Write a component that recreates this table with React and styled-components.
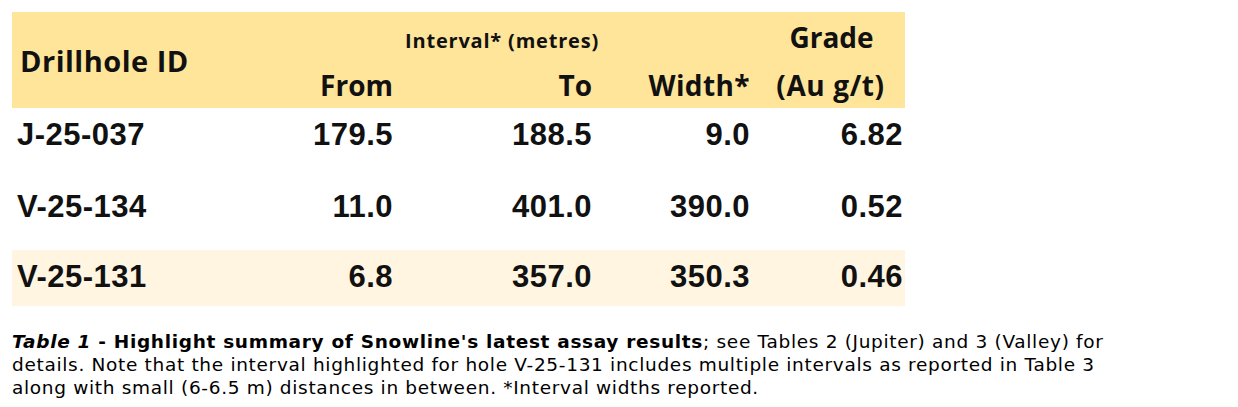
import React from "react";
import styled, { createGlobalStyle } from "styled-components";

const Global = createGlobalStyle`
  html, body { margin: 0; padding: 0; background: #ffffff; }
  body { font-family: "DejaVu Sans", Verdana, sans-serif; color: #000; }
`;

const Page = styled.div`
  padding: 12px 12px 0 12px;
`;

const Table = styled.div`
  width: 893px;
  display: grid;
  grid-template-columns: 238px 145px 199px 158px 153px;
`;

const Head = styled.div`
  grid-column: 1 / -1;
  display: grid;
  grid-template-columns: subgrid;
  grid-template-rows: 50px 46px;
  background: #ffe599;
  font-family: "Open Sans", sans-serif;
  font-weight: 700;
  color: #111;
`;

const HeadCell = styled.div`
  grid-column: ${(p) => p.$col};
  grid-row: ${(p) => p.$row};
  display: flex;
  align-items: center;
  justify-content: ${(p) => p.$align || "flex-end"};
  font-size: ${(p) => p.$size || 28}px;
  letter-spacing: ${(p) => p.$ls || 0}px;
  padding: ${(p) => p.$pad || "0 2px 0 0"};
  white-space: nowrap;
  line-height: 1;
`;

const Row = styled.div`
  grid-column: 1 / -1;
  display: grid;
  grid-template-columns: subgrid;
  height: ${(p) => p.$h}px;
  background: ${(p) => (p.$shade ? "#fff5e1" : "#ffffff")};
  font-family: "Liberation Sans", Arial, sans-serif;
  font-weight: 700;
  font-size: 31px;
  letter-spacing: 0.5px;
  color: #111;
`;

const Cell = styled.div`
  display: flex;
  align-items: center;
  justify-content: ${(p) => (p.$left ? "flex-start" : "flex-end")};
  padding: ${(p) => (p.$left ? "0 0 0 5px" : "0 2px 0 0")};
  padding-bottom: ${(p) => p.$lift || 0}px;
  white-space: nowrap;
`;

const Caption = styled.p`
  margin: 24px 0 0 0;
  width: 1110px;
  font-size: 18.5px;
  letter-spacing: 0.68px;
  line-height: 23px;
  color: #000;
`;

const rows = [
  { id: "J-25-037", from: "179.5", to: "188.5", w: "9.0", g: "6.82", h: 70, lift: 16 },
  { id: "V-25-134", from: "11.0", to: "401.0", w: "390.0", g: "0.52", h: 72, lift: 14 },
  { id: "V-25-131", from: "6.8", to: "357.0", w: "350.3", g: "0.46", h: 56, shade: true, lift: 3 },
];

export default function App() {
  return (
    <Page>
      <Global />
      <Table>
        <Head>
          <HeadCell $col="1" $row="1 / 3" $align="flex-start" $pad="0 0 0 8px" $size={29} $ls={0.5}>
            Drillhole ID
          </HeadCell>
          <HeadCell $col="2 / 4" $row="1" $size={20} $ls={0.8} $pad="8px 0 0 0">
            <span style={{ marginRight: -5 }}>Interval* (metres)</span>
          </HeadCell>
          <HeadCell $col="5" $row="1" $align="center" $pad="0 0 0 6px">Grade</HeadCell>
          <HeadCell $col="2" $row="2">From</HeadCell>
          <HeadCell $col="3" $row="2">To</HeadCell>
          <HeadCell $col="4" $row="2" $ls={0.4}>Width*</HeadCell>
          <HeadCell $col="5" $row="2" $align="center" $ls={0.6} $pad="0 0 0 4px">(Au g/t)</HeadCell>
        </Head>
        {rows.map((r) => (
          <Row key={r.id} $h={r.h} $shade={r.shade}>
            <Cell $left $lift={r.lift}>{r.id}</Cell>
            <Cell $lift={r.lift}>{r.from}</Cell>
            <Cell $lift={r.lift}>{r.to}</Cell>
            <Cell $lift={r.lift}>{r.w}</Cell>
            <Cell $lift={r.lift}>{r.g}</Cell>
          </Row>
        ))}
      </Table>
      <Caption>
        <b>
          <i>Table 1</i> - Highlight summary of Snowline's latest assay results
        </b>
        ; see Tables 2 (Jupiter) and 3 (Valley) for details. Note that the interval highlighted for hole
        V-25-131 includes multiple intervals as reported in Table 3 along with small (6-6.5 m) distances in
        between. *Interval widths reported.
      </Caption>
    </Page>
  );
}
